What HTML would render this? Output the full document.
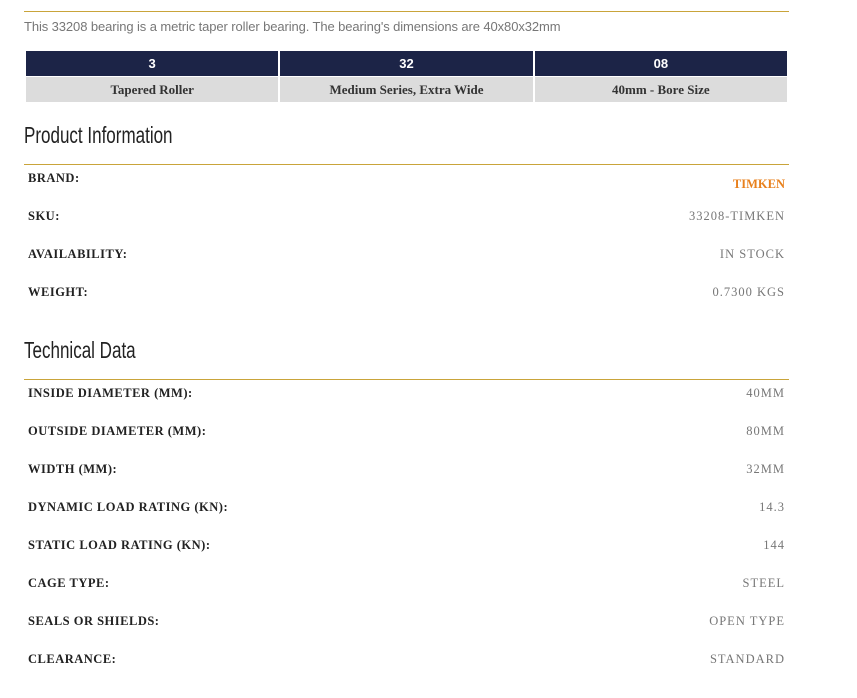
<!DOCTYPE html>
<html><head><style>
body{margin:0;width:857px;height:698px;background:#fff;position:relative;overflow:hidden;font-family:"Liberation Serif",serif}
.line{position:absolute;left:24px;width:765px;height:1px;background:#c9a43a}
.p{position:absolute;left:24px;top:19px;font-family:"Liberation Sans",sans-serif;font-size:13px;color:#777;letter-spacing:-0.1px}
table{position:absolute;left:24px;top:50px;border-collapse:separate;border-spacing:2px 1px;width:765px}
td{text-align:center;font-size:13px;font-weight:bold;width:33%;padding:0}
.h td{background:#1c2447;color:#fff;height:25px;font-family:"Liberation Sans",sans-serif}
.b td{background:#dcdcdc;color:#333;height:25px}
h2{position:absolute;left:24px;margin:0;font-family:"Liberation Sans Narrow","Liberation Sans",sans-serif;font-weight:normal;font-size:23px;color:#222;transform:scaleX(.74);transform-origin:left}
.l{position:absolute;left:28px;font-size:12.5px;font-weight:bold;letter-spacing:0.5px;color:#222;line-height:16px}
.v{position:absolute;right:72px;font-size:12.5px;letter-spacing:1px;color:#777;line-height:16px}
</style></head><body>
<div class="line" style="top:11px"></div>
<div class="p">This 33208 bearing is a metric taper roller bearing. The bearing's dimensions are 40x80x32mm</div>
<table>
<tr class="h"><td>3</td><td>32</td><td>08</td></tr>
<tr class="b"><td>Tapered Roller</td><td>Medium Series, Extra Wide</td><td>40mm - Bore Size</td></tr>
</table>
<h2 style="top:122px">Product Information</h2>
<div class="line" style="top:164px"></div>
<div class="l" style="top:170px">BRAND:</div><div class="v" style="top:176px;color:#e8801c;font-weight:bold;letter-spacing:0;font-size:12.5px">TIMKEN</div>
<div class="l" style="top:208px">SKU:</div><div class="v" style="top:208px">33208-TIMKEN</div>
<div class="l" style="top:246px">AVAILABILITY:</div><div class="v" style="top:246px">IN STOCK</div>
<div class="l" style="top:284px">WEIGHT:</div><div class="v" style="top:284px">0.7300 KGS</div>
<h2 style="top:337px">Technical Data</h2>
<div class="line" style="top:379px"></div>
<div class="l" style="top:385px">INSIDE DIAMETER (MM):</div><div class="v" style="top:385px">40MM</div>
<div class="l" style="top:423px">OUTSIDE DIAMETER (MM):</div><div class="v" style="top:423px">80MM</div>
<div class="l" style="top:461px">WIDTH (MM):</div><div class="v" style="top:461px">32MM</div>
<div class="l" style="top:499px">DYNAMIC LOAD RATING (KN):</div><div class="v" style="top:499px">14.3</div>
<div class="l" style="top:537px">STATIC LOAD RATING (KN):</div><div class="v" style="top:537px">144</div>
<div class="l" style="top:575px">CAGE TYPE:</div><div class="v" style="top:575px">STEEL</div>
<div class="l" style="top:613px">SEALS OR SHIELDS:</div><div class="v" style="top:613px">OPEN TYPE</div>
<div class="l" style="top:651px">CLEARANCE:</div><div class="v" style="top:651px">STANDARD</div>
</body></html>
